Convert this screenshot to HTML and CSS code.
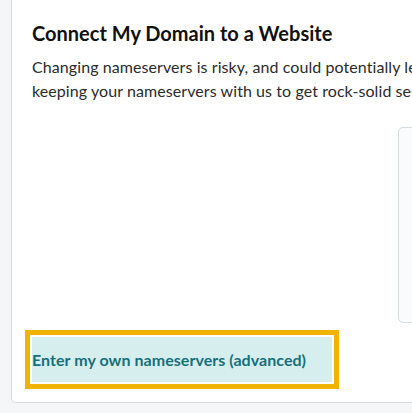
FILE: index.html
```html
<!DOCTYPE html>
<html lang="en">
<head>
<meta charset="utf-8">
<title>Connect My Domain to a Website</title>
<link rel="stylesheet" href="styles.css">
</head>
<body>
<main class="page">
  <section class="card">
    <h1 class="title">Connect My Domain to a Website</h1>
    <p class="lead"><span class="line">Changing nameservers is risky, and could potentially lead to downtime. We recommend</span><span class="line">keeping your nameservers with us to get rock-solid security and reliability.</span></p>
    <div class="row">
      <div class="col-left"></div>
      <div class="col-right"></div>
    </div>
    <div class="actions">
      <button class="link-btn" type="button">Enter my own nameservers (advanced)</button>
    </div>
  </section>
</main>
</body>
</html>
```
FILE: styles.css
```css
html, body {
  margin: 0;
  padding: 0;
  background: #f5f6f7;
  overflow: hidden;
  height: 413px;
}
.page {
  padding: 0 0 0 11px;
  width: 900px;
}
.card {
  background: #fff;
  border: 1px solid #d6dbe0;
  border-top: 0;
  border-radius: 0 0 5px 5px;
  padding: 20px 20px 20px 20px;
  font-family: Lato, "Liberation Sans", sans-serif;
  color: #111;
}
.title {
  margin: 0;
  font-size: 20px;
  line-height: 26px;
  font-weight: 700;
  color: #111;
}
.lead {
  margin: 9px 0 0;
  font-size: 16px;
  line-height: 24px;
  letter-spacing: 0.08px;
  color: #2b2b2b;
}
.line {
  display: block;
  white-space: nowrap;
}
.row {
  display: flex;
  gap: 20px;
  margin-top: 24px;
}
.col-left {
  width: 346px;
  flex: none;
}
.col-right {
  flex: 1;
  height: 194px;
  border: 1px solid #d6dbe0;
  border-radius: 5px;
  background: #fafbfc;
}
.actions {
  margin-top: 14px;
}
.link-btn {
  font-family: inherit;
  font-size: 16px;
  font-weight: 700;
  letter-spacing: 0.05px;
  color: #16707a;
  background: #d6eeee;
  border: 0;
  padding: 0;
  width: 300px;
  height: 45px;
  text-align: left;
  white-space: nowrap;
  outline: 5px solid #f0b400;
  outline-offset: 2px;
}
```
